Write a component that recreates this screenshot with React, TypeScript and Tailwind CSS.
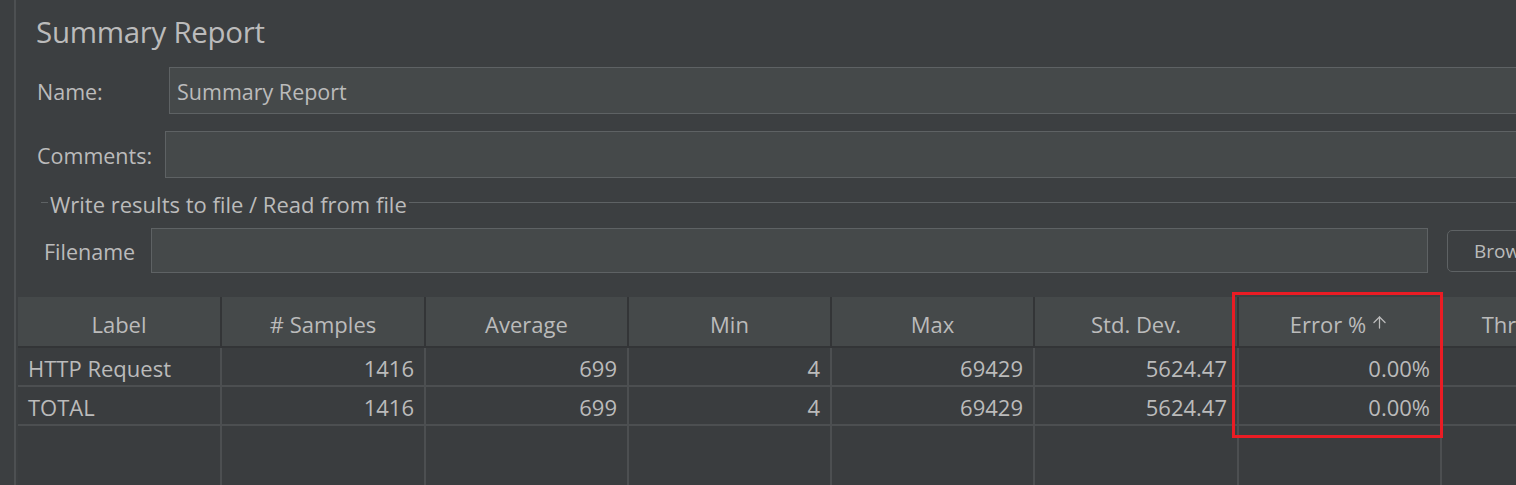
import { ArrowUp } from 'lucide-react'

const columns = [
  { title: 'Label', width: 'w-[202px]' },
  { title: '# Samples', width: 'w-[204px]' },
  { title: 'Average', width: 'w-[203px]' },
  { title: 'Min', width: 'w-[203px]' },
  { title: 'Max', width: 'w-[203px]' },
  { title: 'Std. Dev.', width: 'w-[204px]' },
  { title: 'Error %', width: 'w-[203px]' },
  { title: 'Throughput', width: 'w-[203px]' },
]

const rows = [
  ['HTTP Request', '1416', '699', '4', '69429', '5624.47', '0.00%', ''],
  ['TOTAL', '1416', '699', '4', '69429', '5624.47', '0.00%', ''],
]

const Field = ({ className }: { className: string }) => (
  <div className={`border border-[#5e6264] bg-[#45494a] ${className}`} />
)

export default function App() {
  return (
    <div
      className="h-[485px] w-[1516px] overflow-hidden bg-[#3c3f41] text-[#bbbbbb] flex"
      style={{ fontFamily: '"Open Sans", "Noto Sans", sans-serif' }}
    >
      <div className="w-[14px] shrink-0" />
      <div className="w-[2px] shrink-0 bg-[#4d5052]" />
      <div className="w-[2px] shrink-0" />

      <div className="flex flex-col w-[1700px] shrink-0">
        <h1 className="pl-[18px] pt-[13px] h-[52px] text-[29.5px] leading-[38px] tracking-[-0.3px]">
          Summary Report
        </h1>

        <div className="flex items-center h-[47px] mt-[15px]">
          <span className="pl-[19px] w-[151px] text-[21.5px] pt-[3px]">Name:</span>
          <div className="flex-1 h-full border border-[#5e6264] bg-[#45494a] flex items-center pl-[7px] pt-[3px] text-[21.5px]">
            Summary Report
          </div>
        </div>

        <div className="flex items-center h-[47px] mt-[17px]">
          <span className="pl-[19px] w-[147px] text-[21.5px] pt-[4px]">Comments:</span>
          <Field className="flex-1 h-full" />
        </div>

        <div className="flex items-center h-[26px] mt-[13px]">
          <div className="w-[7px] ml-[23px] h-px bg-[#5e6264] -mt-[4px]" />
          <span className="px-[2px] text-[22px] leading-none">Write results to file / Read from file</span>
          <div className="flex-1 h-px bg-[#5e6264] -mt-[4px]" />
        </div>

        <div className="flex items-center mt-[11px] h-[45px]">
          <span className="pl-[26px] w-[133px] text-[21.5px] pt-[4px]">Filename</span>
          <Field className="w-[1277px] h-full" />
          <div className="ml-[19px] h-[42px] w-[120px] rounded-[5px] border border-[#5e6264] bg-[#3c3f41] flex items-center pl-[26px] text-[19px] pt-[2px]">
            Browse...
          </div>
        </div>

        <div className="relative mt-[24px] flex-1 flex flex-col bg-[#3a3d3f]">
          <div className="flex h-[51px] bg-[#45494a] border-b-2 border-[#333537]">
            {columns.map((c, i) => (
              <div
                key={c.title}
                className={`${c.width} shrink-0 flex items-center justify-center gap-[6px] text-[22px] pt-[5px] ${i > 0 ? 'border-l-2 border-[#333537]' : ''}`}
              >
                {c.title}
                {c.title === 'Error %' && <ArrowUp size={19} strokeWidth={1.6} className="-ml-[2px] -mt-[3px]" />}
              </div>
            ))}
          </div>

          {rows.map((r) => (
            <div key={r[0]} className="flex h-[39px] border-b-2 border-[#4c4f51]">
              {r.map((v, i) => (
                <div
                  key={i}
                  className={`${columns[i].width} shrink-0 flex items-center text-[22px] pt-[3px] ${
                    i === 0 ? 'pl-[10px]' : 'justify-end pr-[10px] border-l-2 border-[#4c4f51]'
                  }`}
                >
                  {v}
                </div>
              ))}
            </div>
          ))}

          <div className="flex flex-1">
            {columns.map((c, i) => (
              <div key={c.title} className={`${c.width} shrink-0 ${i > 0 ? 'border-l-2 border-[#4c4f51]' : ''}`} />
            ))}
          </div>

          <div className="absolute left-[1214px] top-[-5px] w-[211px] h-[146px] border-[3px] border-[#ea1c24]" />
        </div>
      </div>
    </div>
  )
}
